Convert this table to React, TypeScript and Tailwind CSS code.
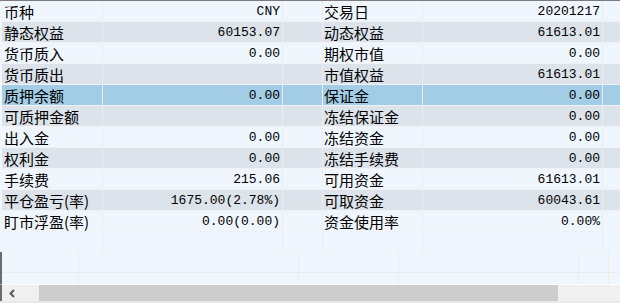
import React from "react";

type Row = { l1: string; v1: string; l2: string; v2: string; tone: "light" | "gray" | "sel" };

const rows: Row[] = [
  { l1: "币种", v1: "CNY", l2: "交易日", v2: "20201217", tone: "light" },
  { l1: "静态权益", v1: "60153.07", l2: "动态权益", v2: "61613.01", tone: "gray" },
  { l1: "货币质入", v1: "0.00", l2: "期权市值", v2: "0.00", tone: "light" },
  { l1: "货币质出", v1: "", l2: "市值权益", v2: "61613.01", tone: "gray" },
  { l1: "质押余额", v1: "0.00", l2: "保证金", v2: "0.00", tone: "sel" },
  { l1: "可质押金额", v1: "", l2: "冻结保证金", v2: "0.00", tone: "gray" },
  { l1: "出入金", v1: "0.00", l2: "冻结资金", v2: "0.00", tone: "light" },
  { l1: "权利金", v1: "0.00", l2: "冻结手续费", v2: "0.00", tone: "gray" },
  { l1: "手续费", v1: "215.06", l2: "可用资金", v2: "61613.01", tone: "light" },
  { l1: "平仓盈亏(率)", v1: "1675.00(2.78%)", l2: "可取资金", v2: "60043.61", tone: "gray" },
  { l1: "盯市浮盈(率)", v1: "0.00(0.00)", l2: "资金使用率", v2: "0.00%", tone: "light" },
];

const toneBg = {
  light: "bg-[#eff6fe]",
  gray: "bg-[#dde3ea]",
  sel: "bg-[#a3cde6]",
};

const cjk = "font-['SimSun','Noto_Sans_CJK_SC',sans-serif] text-[15px] leading-none";
const mono = "font-['Liberation_Mono',monospace] text-[13px] leading-none";

const GridRow: React.FC<{ row?: Row }> = ({ row }) => {
  const bg = row ? toneBg[row.tone] : toneBg.light;
  return (
    <div className={`flex h-[21px] border-b border-[#f2f2f2] ${bg}`}>
      <div className={`flex w-[101px] items-center border-r border-[#ececec] pl-[2px] ${cjk}`}>
        {row?.l1}
      </div>
      <div className={`flex w-[180px] items-center justify-end border-r border-[#ececec] pr-[2px] ${mono}`}>
        {row?.v1}
      </div>
      <div className="w-[40px] border-r border-[#ececec]" />
      <div className={`flex w-[100px] items-center border-r border-[#ececec] pl-[1px] ${cjk}`}>
        {row?.l2}
      </div>
      <div className={`flex w-[180px] items-center justify-end border-r border-[#ececec] pr-[2px] ${mono}`}>
        {row?.v2}
      </div>
      <div className="flex-1" />
    </div>
  );
};

const App: React.FC = () => {
  return (
    <div className="flex h-[303px] w-[620px] flex-col overflow-hidden bg-[#eff6fe] text-black">
      <div className="h-px bg-[#7c7c7c]" />
      <div className="flex flex-col pl-[2px]">
        {rows.map((r) => (
          <GridRow key={r.l1} row={r} />
        ))}
        <div className="flex h-[20px]">
          <div className="w-[101px] border-r border-[#ececec]" />
          <div className="w-[180px] border-r border-[#ececec]" />
          <div className="w-[40px] border-r border-[#ececec]" />
          <div className="w-[100px] border-r border-[#ececec]" />
          <div className="w-[180px] border-r border-[#ececec]" />
        </div>
      </div>
      <div className="flex h-[32px] border-l-2 border-[#6c6c6c]">
        <div className="flex w-full flex-col">
          {[0, 1].map((i) => (
            <div key={i} className={`flex ${i === 0 ? "h-[21px] border-b border-[#ececec]" : "h-[11px]"}`}>
              <div className="w-[77px] border-r border-[#ececec]" />
              <div className="w-[220px] border-r border-[#ececec]" />
              <div className="w-[100px] border-r border-[#ececec]" />
              <div className="w-[180px] border-r border-[#ececec]" />
              <div className="w-[30px] border-r border-[#ececec]" />
            </div>
          ))}
        </div>
      </div>
      <div className="flex h-[17px] border-l-2 border-t border-[#6c6c6c] border-t-white bg-[#f0f0f0]">
        <div className="flex w-[37px] items-center pl-[6px] text-[#5a5a5a]">
          <svg width="8" height="9" viewBox="0 0 8 9">
            <path d="M6 1 L2.5 4.5 L6 8" fill="none" stroke="currentColor" strokeWidth="2" />
          </svg>
        </div>
        <div className="w-[519px] bg-[#cdcdcd]" />
        <div className="flex-1" />
      </div>
      <div className="flex-1 bg-[#e9e9e9]" />
    </div>
  );
};

export default App;
